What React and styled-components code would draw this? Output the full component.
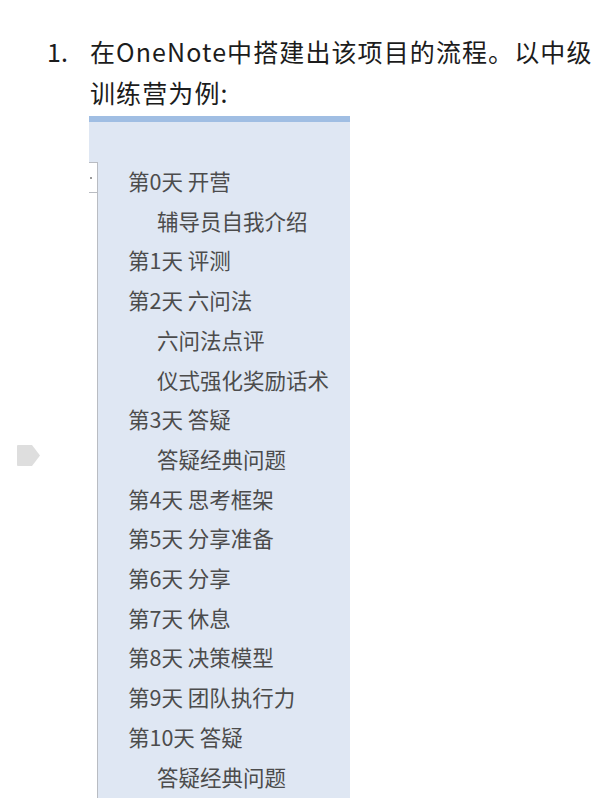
import React from 'react';
import styled, { createGlobalStyle } from 'styled-components';

const GlobalStyle = createGlobalStyle`
  html, body {
    margin: 0;
    padding: 0;
    background: #fff;
    overflow: hidden;
  }
  body {
    font-family: "Noto Sans CJK SC", "Noto Sans", sans-serif;
  }
`;

// page = left rail + numbered item
const Page = styled.div`
  display: flex;
  width: 607px;
  height: 798px;
  overflow: hidden;
  padding-top: 31px;
  box-sizing: border-box;
`;

const Rail = styled.div`
  width: 47px;
  flex-shrink: 0;
  padding-top: 414px;
  box-sizing: border-box;
`;

const Marker = styled.svg`
  display: block;
  margin-left: 17px;
`;

const Item = styled.div`
  display: flex;
  flex: 1;
`;

const Number = styled.div`
  width: 42px;
  flex-shrink: 0;
  font-size: 25px;
  line-height: 41px;
  color: #1c1c1c;
`;

const Content = styled.div`
  flex: 1;
  display: flex;
  flex-direction: column;
`;

const Heading = styled.div`
  font-size: 25px;
  line-height: 41px;
  color: #1c1c1c;
  padding-left: 1px;
  letter-spacing: 1.1px;
  white-space: nowrap;
`;

const Panel = styled.div`
  width: 261px;
  margin-top: 3px;
  display: flex;
  flex-direction: column;
`;

const TopBar = styled.div`
  height: 6px;
  background: #a0bee3;
`;

const PanelHead = styled.div`
  height: 40px;
  background: #dfe7f3;
`;

const PanelBody = styled.div`
  display: flex;
`;

const Gutter = styled.div`
  width: 8px;
  flex-shrink: 0;
  background: #fff;
  border-right: 1px solid #b9bcc2;
`;

const Tab = styled.div`
  height: 29px;
  border-top: 1px solid #b9bcc2;
  border-bottom: 1px solid #b9bcc2;
  display: flex;
  align-items: center;
  padding-left: 1px;
`;

const Dot = styled.span`
  width: 2px;
  height: 2px;
  background: #9a9a9a;
`;

const Outline = styled.div`
  flex: 1;
  background: #dfe7f3;
  padding-left: 30px;
  padding-bottom: 40px;
`;

const Row = styled.div`
  font-size: 21.5px;
  line-height: 39.7px;
  color: #4c4c4c;
  white-space: nowrap;
  margin-top: ${(p) => (p.first ? -1 : 0)}px;
  padding-left: ${(p) => (p.sub ? 29 : 0)}px;
`;

const rows = [
  ['第0天 开营', 0],
  ['辅导员自我介绍', 1],
  ['第1天 评测', 0],
  ['第2天 六问法', 0],
  ['六问法点评', 1],
  ['仪式强化奖励话术', 1],
  ['第3天 答疑', 0],
  ['答疑经典问题', 1],
  ['第4天 思考框架', 0],
  ['第5天 分享准备', 0],
  ['第6天 分享', 0],
  ['第7天 休息', 0],
  ['第8天 决策模型', 0],
  ['第9天 团队执行力', 0],
  ['第10天 答疑', 0],
  ['答疑经典问题', 1],
];

export default function App() {
  return (
    <>
      <GlobalStyle />
      <Page>
        <Rail>
          <Marker width="23" height="21" viewBox="0 0 23 21">
            <path d="M1 0 H15 L23 10.5 L15 21 H1 Q0 21 0 20 V1 Q0 0 1 0 Z" fill="#dedede" />
          </Marker>
        </Rail>
        <Item>
          <Number>1.</Number>
          <Content>
            <Heading>
              在OneNote中搭建出该项目的流程。以中级
              <br />
              训练营为例:
            </Heading>
            <Panel>
              <TopBar />
              <PanelHead />
              <PanelBody>
                <Gutter>
                  <Tab>
                    <Dot />
                  </Tab>
                </Gutter>
                <Outline>
                  {rows.map(([text, level], i) => (
                    <Row key={i} sub={level === 1} first={i === 0}>
                      {text}
                    </Row>
                  ))}
                </Outline>
              </PanelBody>
            </Panel>
          </Content>
        </Item>
      </Page>
    </>
  );
}
